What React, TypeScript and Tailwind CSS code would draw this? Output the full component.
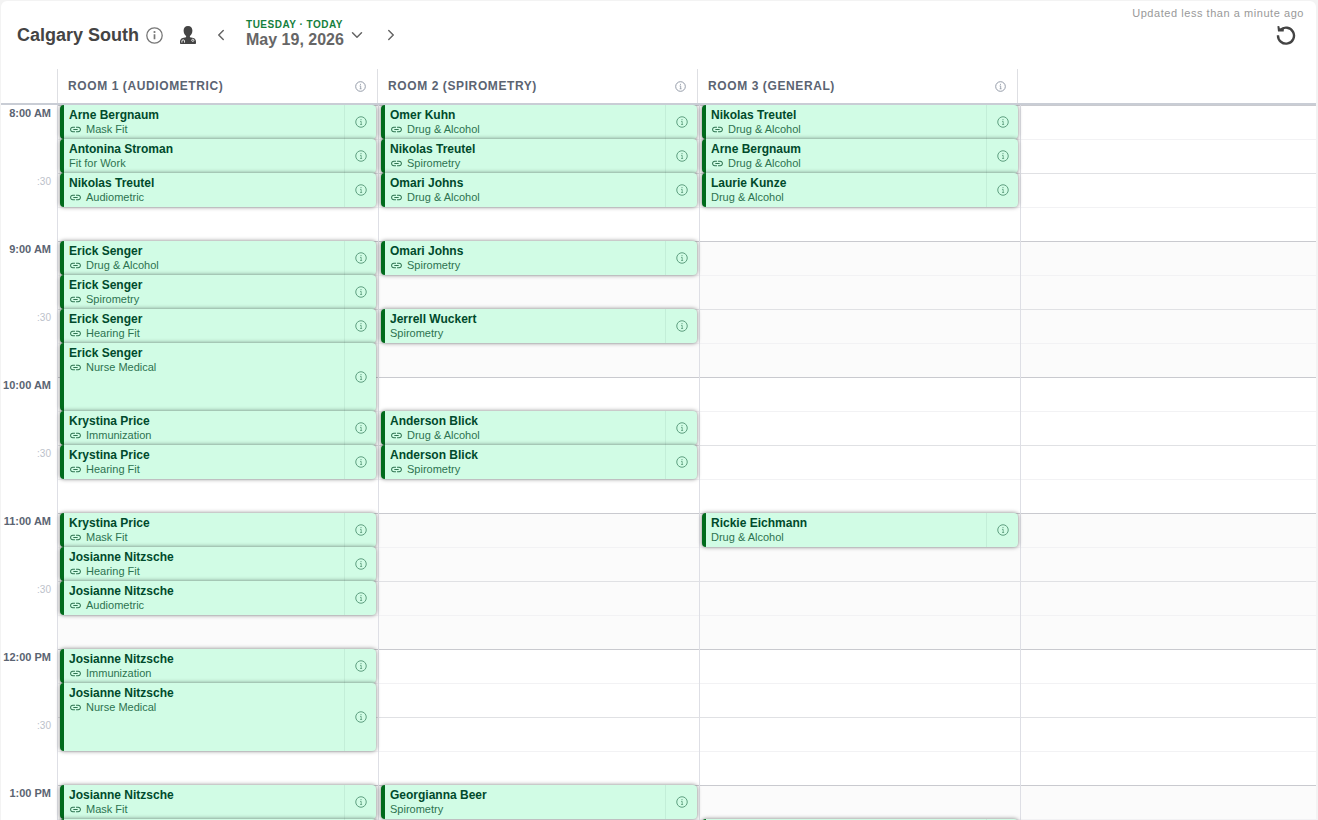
import { ChevronDown, ChevronLeft, ChevronRight } from 'lucide-react'
import { MdLink } from 'react-icons/md'
import clsx from 'clsx'

interface Appointment {
  start: number // quarter hours after opening
  span?: number
  name: string
  service: string
  linked?: boolean
}

interface Room {
  title: string
  appointments: Appointment[]
}

const HOURS = ['8:00 AM', '9:00 AM', '10:00 AM', '11:00 AM', '12:00 PM', '1:00 PM']

const ROOMS: Room[] = [
  {
    title: 'ROOM 1 (AUDIOMETRIC)',
    appointments: [
      { start: 0, name: 'Arne Bergnaum', service: 'Mask Fit', linked: true },
      { start: 1, name: 'Antonina Stroman', service: 'Fit for Work' },
      { start: 2, name: 'Nikolas Treutel', service: 'Audiometric', linked: true },
      { start: 4, name: 'Erick Senger', service: 'Drug & Alcohol', linked: true },
      { start: 5, name: 'Erick Senger', service: 'Spirometry', linked: true },
      { start: 6, name: 'Erick Senger', service: 'Hearing Fit', linked: true },
      { start: 7, span: 2, name: 'Erick Senger', service: 'Nurse Medical', linked: true },
      { start: 9, name: 'Krystina Price', service: 'Immunization', linked: true },
      { start: 10, name: 'Krystina Price', service: 'Hearing Fit', linked: true },
      { start: 12, name: 'Krystina Price', service: 'Mask Fit', linked: true },
      { start: 13, name: 'Josianne Nitzsche', service: 'Hearing Fit', linked: true },
      { start: 14, name: 'Josianne Nitzsche', service: 'Audiometric', linked: true },
      { start: 16, name: 'Josianne Nitzsche', service: 'Immunization', linked: true },
      { start: 17, span: 2, name: 'Josianne Nitzsche', service: 'Nurse Medical', linked: true },
      { start: 20, name: 'Josianne Nitzsche', service: 'Mask Fit', linked: true },
      { start: 21, name: '', service: '' },
    ],
  },
  {
    title: 'ROOM 2 (SPIROMETRY)',
    appointments: [
      { start: 0, name: 'Omer Kuhn', service: 'Drug & Alcohol', linked: true },
      { start: 1, name: 'Nikolas Treutel', service: 'Spirometry', linked: true },
      { start: 2, name: 'Omari Johns', service: 'Drug & Alcohol', linked: true },
      { start: 4, name: 'Omari Johns', service: 'Spirometry', linked: true },
      { start: 6, name: 'Jerrell Wuckert', service: 'Spirometry' },
      { start: 9, name: 'Anderson Blick', service: 'Drug & Alcohol', linked: true },
      { start: 10, name: 'Anderson Blick', service: 'Spirometry', linked: true },
      { start: 20, name: 'Georgianna Beer', service: 'Spirometry' },
    ],
  },
  {
    title: 'ROOM 3 (GENERAL)',
    appointments: [
      { start: 0, name: 'Nikolas Treutel', service: 'Drug & Alcohol', linked: true },
      { start: 1, name: 'Arne Bergnaum', service: 'Drug & Alcohol', linked: true },
      { start: 2, name: 'Laurie Kunze', service: 'Drug & Alcohol' },
      { start: 12, name: 'Rickie Eichmann', service: 'Drug & Alcohol' },
      { start: 21, name: '', service: '' },
    ],
  },
]

const QUARTERS = HOURS.length * 4

function InfoIcon({ className }: { className?: string }) {
  return (
    <svg viewBox="0 0 24 24" fill="none" stroke="currentColor" strokeWidth="2" className={className} aria-hidden="true">
      <circle cx="12" cy="12" r="10.5" />
      <path d="M10 10.8h2.4v6.2M10.2 17h4" strokeWidth="1.7" />
      <circle cx="12" cy="7.2" r="1.2" fill="currentColor" stroke="none" />
    </svg>
  )
}

function SiteInfoIcon() {
  return (
    <svg viewBox="0 0 17 17" fill="none" stroke="currentColor" className="size-[17px]" aria-hidden="true">
      <circle cx="8.5" cy="8.5" r="7.7" strokeWidth="1.3" />
      <path d="M8.5 7.3v5" strokeWidth="1.7" />
      <circle cx="8.5" cy="5" r="1.1" fill="currentColor" stroke="none" />
    </svg>
  )
}

function ClinicianIcon() {
  return (
    <svg viewBox="0 0 16 18" className="h-[18px] w-4" aria-hidden="true">
      <path
        fill="currentColor"
        d="M8 0C5.2 0 3.6 1.8 3.6 4.6c0 2.4 1 4.4 2.5 5.4v1.2L2.6 12.1C.8 12.7 0 14 0 15.8v1.4c0 .5.3.8.8.8h14.4c.5 0 .8-.3.8-.8v-1.4c0-1.8-.8-3.1-2.6-3.7l-3.5-.9V10c1.5-1 2.5-3 2.5-5.4C12.4 1.8 10.8 0 8 0Z"
      />
      <path d="M1.9 16.6v-1.5a1.3 1.3 0 0 1 2.6 0v1.5" fill="none" stroke="white" strokeWidth=".9" />
      <circle cx="12.8" cy="14.3" r="1.1" fill="none" stroke="white" strokeWidth=".8" />
    </svg>
  )
}

function ReloadIcon() {
  return (
    <svg viewBox="0 0 20 20" fill="none" stroke="currentColor" strokeWidth="2.4" className="size-5" aria-hidden="true">
      <path d="M4.4 4.9A8 8 0 1 1 2 10.2" />
      <path fill="currentColor" stroke="none" d="M1.4 1.2 3.2.9l.7 2.7 4 .5-.2 2.4H2z" />
    </svg>
  )
}

function Toolbar() {
  return (
    <header className="flex h-[68px] shrink-0 items-start justify-between">
      <div className="flex h-[68px] items-center pl-4">
        <h1 className="text-lg font-bold text-[#444444]">Calgary South</h1>
        <button aria-label="Site details" className="ml-[7px] text-[#777777]">
          <SiteInfoIcon />
        </button>
        <button aria-label="Clinicians" className="ml-[17px] text-[#444444]">
          <ClinicianIcon />
        </button>
        <button aria-label="Previous day" className="ml-4 text-[#666666]">
          <ChevronLeft size={18} strokeWidth={2} />
        </button>
        <button className="ml-4 flex items-center gap-1 pb-1 text-left text-[#666666]">
          <span className="flex flex-col">
            <span className="text-[10px] leading-[14px] font-bold tracking-wider text-[#15803d]">TUESDAY · TODAY</span>
            <span className="text-base leading-4 font-bold">May 19, 2026</span>
          </span>
          <ChevronDown size={18} strokeWidth={2} className="mt-1" />
        </button>
        <button aria-label="Next day" className="ml-4 text-[#666666]">
          <ChevronRight size={18} strokeWidth={2} />
        </button>
      </div>
      <div className="flex flex-col items-end pt-1 pr-3">
        <p className="text-[11px] leading-4 tracking-wider text-[#999999]">Updated less than a minute ago</p>
        <button aria-label="Refresh" className="mt-1 mr-2 text-[#444444]">
          <ReloadIcon />
        </button>
      </div>
    </header>
  )
}

function RoomHeader({ title }: { title: string }) {
  return (
    <div className="flex items-center justify-between border-l border-[#dedfe3] pr-[11px] pl-[10px]">
      <h2 className="text-xs font-bold tracking-wider text-[#5b6472]">{title}</h2>
      <button aria-label={`About ${title}`} className="text-[#8b93a1]">
        <InfoIcon className="size-[11px]" />
      </button>
    </div>
  )
}

function AppointmentCard({ appointment, column }: { appointment: Appointment; column: number }) {
  const { start, span = 1, name, service, linked } = appointment
  return (
    <article
      className="z-10 mr-[2px] ml-[3px] flex overflow-hidden rounded border-l-4 border-[#006b1c] bg-[#d1fce5] shadow-[0_0_4px_rgba(0,0,0,0.5)]"
      style={{ gridRow: `${start + 1} / span ${span}`, gridColumn: column }}
    >
      <div className="min-w-0 flex-1 pt-[3px] pl-[5px]">
        <h3 className="truncate text-xs leading-[14px] font-bold text-[#004a2c]">{name}</h3>
        <p className="flex items-center gap-1 text-[11px] leading-[14px] text-[#2d7350]">
          {linked && <MdLink size={13} />}
          {service}
        </p>
      </div>
      <button
        aria-label="Appointment details"
        className="flex w-8 items-center justify-center border-l border-[#c3eed8] text-[#5f9f80]"
      >
        <InfoIcon className="size-3" />
      </button>
    </article>
  )
}

function Schedule() {
  return (
    <div className="grid auto-rows-[34px] grid-cols-[56px_321px_321px_321px_1fr]">
      {Array.from({ length: QUARTERS }, (_, q) => (
        <div
          key={q}
          className={clsx(
            'col-start-2 col-end-6 border-t',
            q % 4 === 0 ? 'border-[#c9cacf]' : q % 2 === 0 ? 'border-[#e0e1e4]' : 'border-[#f2f2f4]',
            Math.floor(q / 4) % 2 === 1 && 'bg-[#fbfbfb]'
          )}
          style={{ gridRow: q + 1 }}
        />
      ))}

      {[2, 3, 4, 5].map(column => (
        <div
          key={column}
          className="border-l border-[#dedfe5]"
          style={{ gridColumn: column, gridRow: `1 / span ${QUARTERS}` }}
        />
      ))}

      {HOURS.map((label, i) => (
        <div
          key={label}
          className="col-start-1 pr-[6px] text-right text-[11px] leading-4 font-bold whitespace-nowrap text-[#5b6472]"
          style={{ gridRow: i * 4 + 1 }}
        >
          {label}
        </div>
      ))}

      {HOURS.slice(0, -1).map((label, i) => (
        <div
          key={`${label}-half`}
          className="col-start-1 pt-px pr-[6px] text-right text-[10px] leading-4 text-[#bcc1ca]"
          style={{ gridRow: i * 4 + 3 }}
        >
          :30
        </div>
      ))}

      {ROOMS.map((room, i) =>
        room.appointments.map(a => <AppointmentCard key={`${i}-${a.start}`} appointment={a} column={i + 2} />)
      )}
    </div>
  )
}

export default function App() {
  return (
    <div className="flex h-screen flex-col overflow-hidden bg-[#f3f3f3] pt-px pr-[2px] pl-px font-['Liberation_Sans',Arial,sans-serif]">
      <main className="flex min-h-0 flex-1 flex-col overflow-hidden rounded-t-md bg-white">
        <Toolbar />
        <div className="grid h-9 shrink-0 grid-cols-[56px_320px_320px_320px_1fr] border-b-2 border-[#c9cdd5]">
          <div />
          {ROOMS.map(room => (
            <RoomHeader key={room.title} title={room.title} />
          ))}
          <div className="border-l border-[#dedfe3]" />
        </div>
        <div className="min-h-0 flex-1 overflow-hidden">
          <Schedule />
        </div>
      </main>
    </div>
  )
}
